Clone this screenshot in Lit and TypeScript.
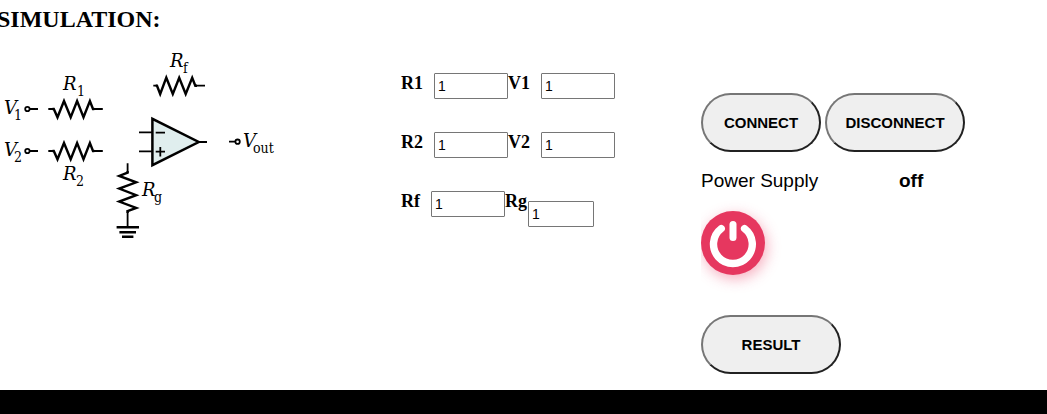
import { LitElement, html, svg, css } from "lit";
import { customElement, state } from "lit/decorators.js";

interface Field {
  id: string;
  value: string;
}

@customElement("circuit-diagram")
class CircuitDiagram extends LitElement {
  static styles = css`
    :host {
      display: block;
    }
    .diagram {
      display: block;
      width: 280px;
      height: 192px;
    }
    .lead {
      fill: none;
      stroke: #000;
      stroke-width: 1.8;
    }
    .coil {
      fill: none;
      stroke: #000;
      stroke-width: 2.4;
    }
    .node {
      fill: #fff;
      stroke: #000;
      stroke-width: 1.8;
    }
    .amp {
      fill: #e0eeee;
      stroke: #000;
      stroke-width: 2.5;
    }
    .bar {
      stroke: #000;
      stroke-width: 2.6;
    }
    .name {
      font: italic 18px "DejaVu Serif", serif;
    }
    .sub {
      font: 14px "DejaVu Serif Condensed", "DejaVu Serif", serif;
    }
  `;

  private label(x: number, y: number, name: string, subX: number, sub: string) {
    return svg`<text class="name" x=${x} y=${y}>${name}</text>
      <text class="sub" x=${subX} y=${y + 6}>${sub}</text>`;
  }

  private resistor(x: number, y: number) {
    return svg`<g transform="translate(${x} ${y})">
      <path class="lead" d="M0 0H5.5M44.5 0H54.5" />
      <path class="coil" d="M4.2 0H5.5L9.2 8.3L15.7 -8L22.4 8.3L28.8 -8L35.2 8.3L41.6 -8L44.7 0H46" />
    </g>`;
  }

  render() {
    return html`<svg class="diagram" viewBox="0 48 280 192" role="img" aria-label="Differential amplifier circuit">
      ${this.label(63, 90, "R", 77, "1")}
      ${this.label(4, 114, "V", 14, "1")}
      ${this.label(4, 156, "V", 14, "2")}
      ${this.label(63, 180, "R", 76, "2")}
      ${this.label(170, 67, "R", 183, "f")}
      ${this.label(142, 196, "R", 154, "g")}
      ${this.label(243, 147, "V", 253, "out")}
      ${this.resistor(48.3, 109)}
      ${this.resistor(48.3, 151)}
      <path class="lead" d="M153.3 85.7H157M195 85.7H205" />
      <path class="coil" d="M155.7 85.7H157L160.2 94L166.3 77.7L172.8 94L179.2 77.7L185.7 94L192.2 77.7L195.3 85.7H197" />
      <path class="lead" d="M30 109H38M30 151H38M229 141.7H235" />
      <circle class="node" cx="27.4" cy="109" r="2.2" />
      <circle class="node" cx="27.4" cy="151" r="2.2" />
      <circle class="node" cx="237.6" cy="141.7" r="2.2" />
      <path class="lead" d="M139 132.4H152M139 151.3H152M199 142H207" />
      <path class="amp" d="M152.4 118.8V165.2L198.7 142Z" />
      <path class="lead" d="M155.7 132.7H165M155.7 151.7H165M160.3 147V156.4" />
      <path class="lead" d="M127.6 163.3V173M127.6 210V227" />
      <path class="coil" d="M127.6 171V172.6L119.2 176L136.2 182.3L119.2 188.6L136.2 195.2L119.2 201.6L136.2 208L127.6 211V213" />
      <path class="bar" d="M116.6 227.2H139M119.4 232.3H136M122 236.8H133.4" />
    </svg>`;
  }
}

@customElement("app-root")
class AppRoot extends LitElement {
  static styles = css`
    :host {
      display: flex;
      flex-direction: column;
      min-height: 100vh;
      background: #fff;
      color: #000;
      font-family: "Liberation Serif", "Times New Roman", serif;
    }
    .title {
      margin: 5px 0 0 -3px;
      font-size: 24px;
      line-height: 28px;
      font-weight: bold;
    }
    .bench {
      display: grid;
      grid-template-columns: 401px 300px 1fr;
      align-items: start;
      padding-bottom: 16px;
    }
    .circuit {
      padding-top: 15px;
    }
    .values {
      display: grid;
      gap: 33px;
      padding-top: 40px;
    }
    .row {
      display: flex;
      align-items: flex-start;
    }
    .row label {
      margin-right: 11px;
      font-size: 18px;
      line-height: 20px;
      font-weight: bold;
    }
    .row input {
      box-sizing: border-box;
      width: 74px;
      height: 26px;
      margin: 0;
      padding: 0 3px;
      border: 1px solid #767676;
      border-radius: 1px;
      background: #fff;
      color: #000;
      font: 14px "Liberation Sans", Arial, sans-serif;
    }
    .row .tight {
      margin-right: 1px;
    }
    .row .lowered {
      width: 66px;
      margin-top: 10px;
    }
    .panel {
      padding-top: 60px;
      font-family: "Liberation Sans", Arial, sans-serif;
    }
    .actions {
      display: flex;
      gap: 4px;
    }
    .pill {
      box-sizing: border-box;
      width: 140px;
      height: 59px;
      padding: 0;
      border: 2px solid;
      border-color: #767676 #212121 #212121 #767676;
      border-radius: 30px;
      background: #efefef;
      color: #000;
      font: bold 15px "Liberation Sans", Arial, sans-serif;
    }
    .short {
      width: 120px;
    }
    .status {
      display: flex;
      margin-top: 17px;
      font-size: 19px;
      line-height: 24px;
    }
    .caption {
      width: 198px;
    }
    .power {
      display: block;
      width: 64px;
      height: 64px;
      margin: 18px 0 40px;
      padding: 0;
      border: 0;
      background: none;
      clip-path: inset(-24px -24px -24px 0);
    }
    .glyph {
      display: block;
      border-radius: 50%;
      background: #e6375f;
      box-shadow: 2px 4px 14px rgba(232, 54, 95, 0.4);
    }
    .footer {
      flex: 1;
      min-height: 24px;
      background: #000;
    }
  `;

  @state() private powered = false;

  private rows: Field[][] = [
    [{ id: "R1", value: "1" }, { id: "V1", value: "1" }],
    [{ id: "R2", value: "1" }, { id: "V2", value: "1" }],
    [{ id: "Rf", value: "1" }, { id: "Rg", value: "1" }],
  ];

  private field({ id, value }: Field) {
    const ground = id === "Rg";
    return html`<label class=${ground ? "tight" : ""} for=${id}>${id}</label
      ><input class=${ground ? "lowered" : ""} id=${id} type="text" .value=${value} />`;
  }

  render() {
    return html`
      <h2 class="title">SIMULATION:</h2>
      <main class="bench">
        <circuit-diagram class="circuit"></circuit-diagram>
        <form class="values">
          ${this.rows.map((row) => html`<div class="row">${row.map((f) => this.field(f))}</div>`)}
        </form>
        <section class="panel">
          <div class="actions">
            <button class="pill short" type="button">CONNECT</button>
            <button class="pill" type="button">DISCONNECT</button>
          </div>
          <div class="status">
            <span class="caption">Power Supply</span>
            <b>${this.powered ? "on" : "off"}</b>
          </div>
          <button class="power" type="button" aria-label="Power" @click=${() => (this.powered = !this.powered)}>
            <svg class="glyph" width="64" height="64" viewBox="0 0 64 64" fill="none" stroke="#fff" stroke-linecap="round">
              <path stroke-width="7.4" d="M20.2 17.6A19.4 19.4 0 1 0 43.6 17.6" />
              <path stroke-width="7" d="M32 13.5V26.5" />
            </svg>
          </button>
          <button class="pill" type="button">RESULT</button>
        </section>
      </main>
      <footer class="footer"></footer>
    `;
  }
}
